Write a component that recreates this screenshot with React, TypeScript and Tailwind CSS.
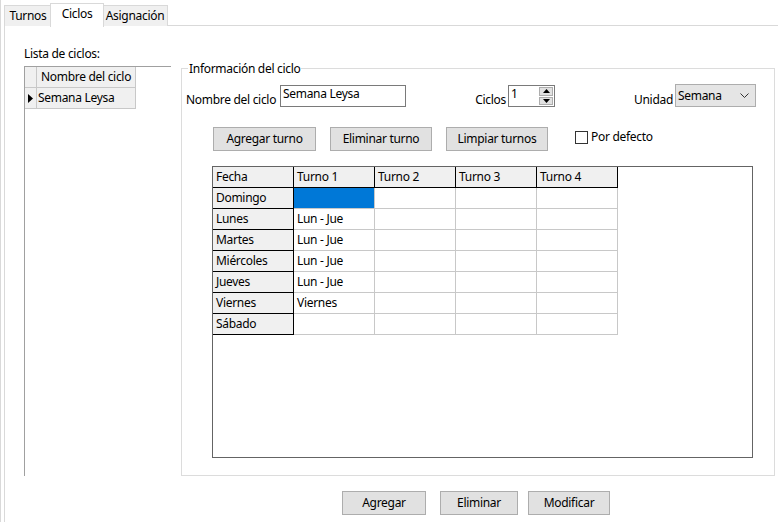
import React from "react";

const font = { fontFamily: '"Noto Sans", "Open Sans", sans-serif', letterSpacing: "-0.3px" };

function Tab({ label, selected, w }: { label: string; selected?: boolean; w: string }) {
  if (selected) {
    return (
      <div className={`${w} h-[24px] -mx-[2px] relative z-10 bg-white border border-b-0 border-[#d9d9d9] flex items-start justify-center pt-[4px] -mb-px`}>
        <span>{label}</span>
      </div>
    );
  }
  return (
    <div className={`${w} h-[21px] bg-[#f0f0f0] border border-b-0 border-[#d9d9d9] flex items-start justify-center pt-[4px]`}>
      <span>{label}</span>
    </div>
  );
}

function Btn({ label, w }: { label: string; w: string }) {
  return (
    <div className={`${w} h-[24px] bg-[#e1e1e1] border border-[#adadad] flex items-center justify-center`}>
      {label}
    </div>
  );
}

const days = ["Domingo", "Lunes", "Martes", "Miércoles", "Jueves", "Viernes", "Sábado"];
const t1 = ["", "Lun - Jue", "Lun - Jue", "Lun - Jue", "Lun - Jue", "Viernes", ""];

export default function App() {
  return (
    <div className="w-[778px] h-[522px] bg-white overflow-hidden text-[12px] text-black leading-none whitespace-nowrap border-l border-[#d9d9d9]" style={font}>
      {/* Tab strip */}
      <div className="flex items-end h-[26px] pl-[3px]">
        <Tab label="Turnos" w="w-[48px]" />
        <Tab label="Ciclos" selected w="w-[54px]" />
        <Tab label="Asignación" w="w-[66px]" />
      </div>
      {/* Tab panel */}
      <div className="ml-[3px] -mt-px h-[497px] border-l border-t border-[#d9d9d9] flex flex-col">
        <div className="flex">
          {/* Left column */}
          <div className="ml-[19px] w-[147px] flex flex-col">
            <div className="mt-[22px] h-[18px]">Lista de ciclos:</div>
            <div className="h-[410px] border-l border-t border-[#a0a0a0] flex flex-col">
              <div className="flex h-[21px]">
                <div className="w-[12px] bg-[#f0f0f0] border-r border-b border-[#c8c8c8]" />
                <div className="w-[99px] bg-[#f0f0f0] border-r border-b border-[#c8c8c8] pl-[4px] flex items-center">Nombre del ciclo</div>
              </div>
              <div className="flex h-[21px]">
                <div className="w-[12px] bg-[#f0f0f0] border-r border-b border-[#c8c8c8] flex items-center justify-center">
                  <svg width="5" height="9" viewBox="0 0 5 9"><path d="M0 0 L5 4.5 L0 9 Z" fill="#000" /></svg>
                </div>
                <div className="w-[99px] bg-[#f0f0f0] border-r border-b border-[#c8c8c8] pl-[1px] flex items-center">Semana Leysa</div>
              </div>
            </div>
          </div>
          {/* Group box */}
          <div className="ml-[10px] mt-[42px] w-[594px] h-[408px] border border-[#dcdcdc] relative flex flex-col">
            <div className="absolute -top-[7px] left-[6px] bg-white px-[1px] leading-[14px]">Información del ciclo</div>
            {/* Row 1 */}
            <div className="flex items-end mt-[15px] pl-[4px]">
              <div className="w-[94px] pb-[1px]">Nombre del ciclo</div>
              <div className="w-[126px] h-[22px] border border-[#7a7a7a] pl-[2px] pt-[2px]">Semana Leysa</div>
              <div className="w-[100px] text-right pb-[1px]">Ciclos</div>
              <div className="ml-[2px] w-[47px] h-[22px] border border-[#7a7a7a] flex">
                <div className="flex-1 pl-[2px] pt-[2px]">1</div>
                <div className="w-[15px] flex flex-col gap-[1px] py-[1px] pr-[1px]">
                  <div className="flex-1 bg-[#e1e1e1] border border-[#adadad] flex items-center justify-center">
                    <svg width="7" height="4" viewBox="0 0 7 4"><path d="M0 4 L3.5 0 L7 4 Z" fill="#000" /></svg>
                  </div>
                  <div className="flex-1 bg-[#e1e1e1] border border-[#adadad] flex items-center justify-center">
                    <svg width="7" height="4" viewBox="0 0 7 4"><path d="M0 0 L3.5 4 L7 0 Z" fill="#000" /></svg>
                  </div>
                </div>
              </div>
              <div className="w-[118px] text-right pb-[1px]">Unidad</div>
              <div className="ml-[2px] w-[81px] h-[23px] bg-[#e5e5e5] border border-[#adadad] flex items-center pl-[2px] pr-[6px]">
                <span className="flex-1 mt-[1px]">Semana</span>
                <svg width="9" height="6" viewBox="0 0 9 6"><path d="M0.5 0.5 L4.5 4.5 L8.5 0.5" stroke="#333" strokeWidth="1" fill="none" /></svg>
              </div>
            </div>
            {/* Row 2 */}
            <div className="flex items-center mt-[20px] pl-[31px]">
              <Btn label="Agregar turno" w="w-[103px]" />
              <div className="ml-[14px]"><Btn label="Eliminar turno" w="w-[102px]" /></div>
              <div className="ml-[14px]"><Btn label="Limpiar turnos" w="w-[102px]" /></div>
              <div className="ml-[27px] w-[13px] h-[13px] border border-[#333] bg-white -mt-[4px]" />
              <div className="ml-[3px] -mt-[4px]">Por defecto</div>
            </div>
            {/* Data grid */}
            <div className="ml-[30px] mt-[15px] w-[541px] h-[292px] border border-[#646464]">
              <div className="grid grid-cols-[81px_81px_81px_81px_81px] w-[405px]">
                {["Fecha", "Turno 1", "Turno 2", "Turno 3", "Turno 4"].map((h) => (
                  <div key={h} className="h-[21px] bg-[#f0f0f0] border-r border-b border-black pl-[3px] flex items-center">{h}</div>
                ))}
                {days.map((d, i) => (
                  <React.Fragment key={d}>
                    <div className="h-[21px] bg-[#f0f0f0] border-r border-b border-black pl-[3px] flex items-center">{d}</div>
                    <div className={`h-[21px] border-r border-b border-[#c8c8c8] pl-[3px] flex items-center ${i === 0 ? "bg-[#0078d7]" : "bg-white"}`}>{t1[i]}</div>
                    <div className="h-[21px] border-r border-b border-[#c8c8c8]" />
                    <div className="h-[21px] border-r border-b border-[#c8c8c8]" />
                    <div className="h-[21px] border-r border-b border-[#c8c8c8]" />
                  </React.Fragment>
                ))}
              </div>
            </div>
          </div>
        </div>
        {/* Bottom buttons */}
        <div className="flex mt-[15px] pl-[337px]">
          <Btn label="Agregar" w="w-[84px]" />
          <div className="ml-[14px]"><Btn label="Eliminar" w="w-[78px]" /></div>
          <div className="ml-[10px]"><Btn label="Modificar" w="w-[82px]" /></div>
        </div>
      </div>
    </div>
  );
}
